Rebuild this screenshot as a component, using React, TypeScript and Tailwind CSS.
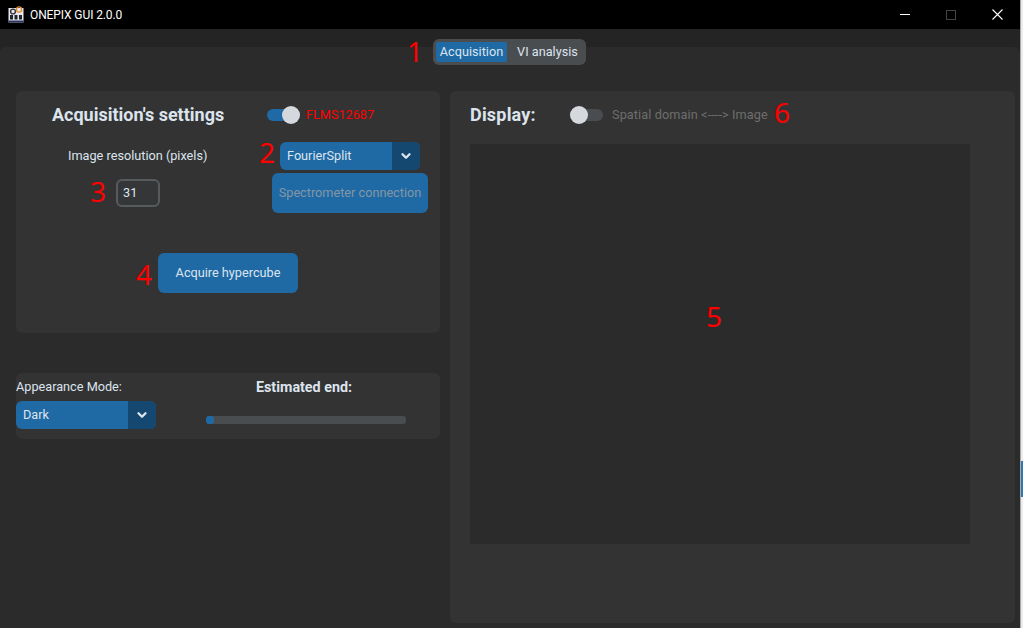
import { ChevronDown } from "lucide-react";

function Mark({ n, className }: { n: string; className: string }) {
  return (
    <span className={`absolute text-[28px] leading-none text-[#ff0000] font-['Noto_Sans',sans-serif] ${className}`}>
      {n}
    </span>
  );
}

function Dropdown({ label }: { label: string }) {
  return (
    <div className="flex h-[28px] w-[140px] overflow-hidden rounded-[6px] bg-[#1f6aa5]">
      <span className="flex-1 pl-[7px] text-[12.7px] leading-[27px] text-[#dce4ee]">{label}</span>
      <span className="flex w-[28px] items-center justify-center bg-[#144870] text-[#dce4ee]">
        <ChevronDown size={14} strokeWidth={4} />
      </span>
    </div>
  );
}

function Toggle({ on }: { on: boolean }) {
  return (
    <div className="relative h-[12px] w-[33px] rounded-full">
      <div className={`h-full w-full rounded-full ${on ? "bg-[#1f6aa5]" : "bg-[#4a4d50]"}`} />
      <div className={`absolute top-[-3px] h-[18px] w-[18px] rounded-full bg-[#d5d9de] ${on ? "right-0" : "left-0"}`} />
    </div>
  );
}

function AppLogo() {
  return (
    <svg width="16" height="17" viewBox="0 0 16 17">
      <rect x="0.5" y="2" width="15" height="14.5" fill="#e8e8ee" />
      <rect x="0.5" y="14.5" width="15" height="2" fill="#2a3560" />
      <circle cx="5" cy="5.5" r="2.4" fill="none" stroke="#30343c" strokeWidth="1.4" />
      <circle cx="11" cy="3.5" r="2.6" fill="none" stroke="#e08a2c" strokeWidth="1.4" />
      <rect x="2" y="9" width="3" height="4.5" fill="#20242c" />
      <rect x="6.5" y="9" width="3" height="4.5" fill="#20242c" />
      <rect x="11" y="9" width="3" height="4.5" fill="#20242c" />
    </svg>
  );
}

export default function App() {
  return (
    <div className="relative flex h-[628px] w-[1023px] overflow-hidden bg-[#242424] font-['Roboto',sans-serif]">
      <div className="flex w-[1020px] flex-col">
        {/* title bar */}
        <div className="flex h-[29px] items-center bg-black pl-[8px]">
          <AppLogo />
          <span className="ml-[6px] text-[12px] tracking-[-0.1px] text-white">ONEPIX GUI 2.0.0</span>
          <div className="ml-auto flex h-full">
            <div className="flex w-[46px] items-center justify-center">
              <div className="h-px w-[10px] bg-white" />
            </div>
            <div className="flex w-[46px] items-center justify-center">
              <div className="h-[10px] w-[10px] border border-[#444444]" />
            </div>
            <div className="flex w-[46px] items-center justify-center">
              <svg width="11" height="11" viewBox="0 0 11 11" stroke="#ffffff" strokeWidth="1.1">
                <path d="M0.5 0.5 L10.5 10.5 M10.5 0.5 L0.5 10.5" />
              </svg>
            </div>
          </div>
        </div>

        {/* tabs + frame */}
        <div className="flex flex-1 flex-col pt-[10px]">
          <div className="relative z-10 mb-[-18px] ml-[433px] flex h-[26px] w-[153px] rounded-[6px] bg-[#4a4d50] p-[3px] text-[12.7px] text-[#dce4ee]">
            <span className="flex w-[71px] items-center justify-center rounded-[2px] bg-[#1f6aa5]">Acquisition</span>
            <span className="flex flex-1 items-center justify-center pl-[5px]">VI analysis</span>
          </div>

          <div className="flex flex-1 gap-[10px] rounded-t-[6px] bg-[#2b2b2b] pb-[5px] pl-[16px] pr-[5px] pt-[44px]">
            {/* left column */}
            <div className="flex w-[424px] flex-col gap-[40px]">
              <section className="h-[242px] rounded-[6px] bg-[#333333] pl-[36px] pt-[14px]">
                <div className="flex h-[20px] items-center">
                  <h2 className="mt-[-2px] w-[215px] text-[18px] font-bold text-[#dce4ee]">Acquisition's settings</h2>
                  <Toggle on />
                  <span className="ml-[6px] text-[12.7px] text-[#ff0000]">FLMS12687</span>
                </div>

                <div className="mt-[17px] flex">
                  <div className="w-[220px] pl-[16px]">
                    <p className="h-[28px] text-[12.7px] leading-[27px] text-[#dce4ee]">Image resolution (pixels)</p>
                    <div className="ml-[48px] mt-[9px] h-[28px] w-[44px] rounded-[6px] border-2 border-[#565b5e] bg-[#343638] pl-[5px] text-[12.7px] leading-[24px] text-[#dce4ee]">
                      31
                    </div>
                  </div>
                  <div className="flex flex-col">
                    <div className="ml-[8px]">
                      <Dropdown label="FourierSplit" />
                    </div>
                    <button className="mt-[3px] h-[40px] w-[156px] rounded-[6px] bg-[#1f6aa5] text-[12.7px] text-[#8496a6]">
                      Spectrometer connection
                    </button>
                  </div>
                </div>

                <button className="ml-[106px] mt-[40px] h-[40px] w-[140px] rounded-[6px] bg-[#1f6aa5] text-[12.7px] text-[#dce4ee]">
                  Acquire hypercube
                </button>
              </section>

              <section className="flex h-[66px] rounded-[6px] bg-[#333333]">
                <div className="flex w-[190px] flex-col pt-[6px]">
                  <p className="h-[22px] text-[12.7px] leading-[16px] text-[#dce4ee]">Appearance Mode:</p>
                  <Dropdown label="Dark" />
                </div>
                <div className="flex flex-1 flex-col pt-[6px]">
                  <p className="w-[196px] text-center text-[14.3px] font-bold leading-[16px] text-[#dce4ee]">Estimated end:</p>
                  <div className="mt-[21px] h-[8px] w-[200px] overflow-hidden rounded-[3px] bg-[#4a4d50]">
                    <div className="h-full w-[8px] rounded-[3px] bg-[#1f6aa5]" />
                  </div>
                </div>
              </section>
            </div>

            {/* right panel */}
            <section className="flex flex-1 flex-col rounded-[6px] bg-[#333333] pl-[20px] pt-[14px]">
              <div className="flex h-[20px] items-center">
                <h2 className="mt-[-2px] w-[100px] text-[18px] font-bold tracking-[0.2px] text-[#dce4ee]">Display:</h2>
                <Toggle on={false} />
                <span className="ml-[9px] text-[12.7px] tracking-[0.1px] text-[#6e6e6e]">Spatial domain &lt;----&gt; Image</span>
              </div>
              <div className="mt-[19px] h-[400px] w-[500px] bg-[#2b2b2b]" />
            </section>
          </div>
        </div>
      </div>

      {/* sliver of the window behind */}
      <div className="flex w-[3px] flex-col border-l border-[#a8a8a8]">
        <div className="h-[461px] bg-[#ececec]" />
        <div className="h-[36px] bg-[#2f76b5]" />
        <div className="flex-1 bg-[#ececec]" />
      </div>

      <Mark n="1" className="left-[407px] top-[37px]" />
      <Mark n="2" className="left-[259px] top-[138px]" />
      <Mark n="3" className="left-[90px] top-[177px]" />
      <Mark n="4" className="left-[136px] top-[260px]" />
      <Mark n="5" className="left-[706px] top-[302px]" />
      <Mark n="6" className="left-[774px] top-[98px]" />
    </div>
  );
}
